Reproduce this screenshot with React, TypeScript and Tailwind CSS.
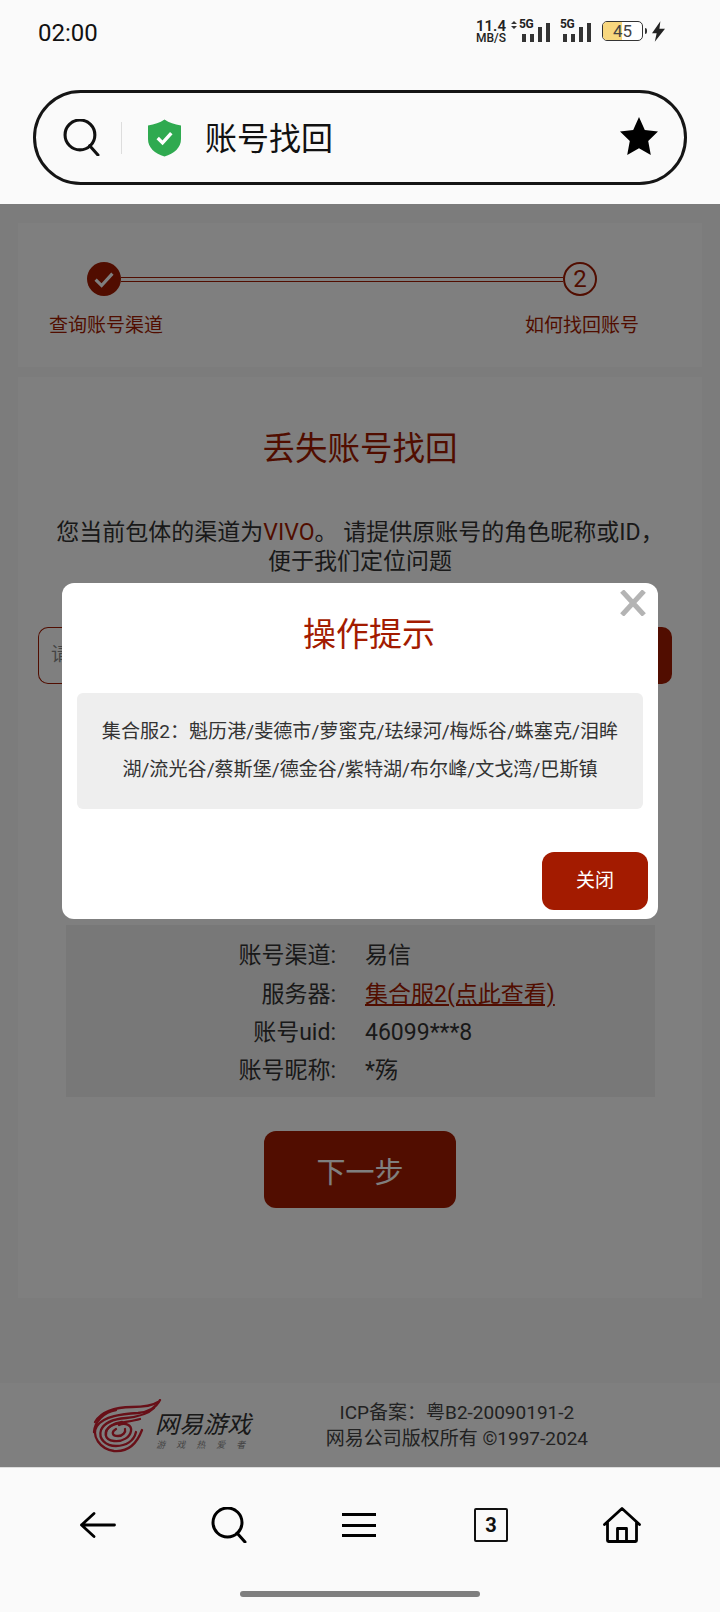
import React from 'react';

const FONT = "font-['Roboto','Noto_Sans_CJK_SC',sans-serif]";

function SearchIcon({ className }: { className?: string }) {
  return (
    <svg viewBox="0 0 36 36" fill="none" stroke="currentColor" strokeWidth="3" className={className}>
      <ellipse cx="16.5" cy="15.5" rx="14.5" ry="14.5" />
      <path d="M26 26l8 9" strokeLinecap="round" />
    </svg>
  );
}

function Signal({ arrows }: { arrows?: boolean }) {
  return (
    <div className="relative mb-[6px] flex h-[24px] items-end gap-[4px]">
      {arrows && (
        <svg viewBox="0 0 6 8" className="absolute left-[-11px] top-[3px] h-[8px] w-[6px]" fill="#333">
          <path d="M3 0l3 3H0zM3 8L0 5h6z" />
        </svg>
      )}
      <span className="absolute left-[-3px] top-[1px] text-[12px] font-bold leading-[11px] tracking-[-0.5px] text-[#222]">5G</span>
      <i className="h-[8px] w-[4px] bg-[#333]" />
      <i className="h-[8px] w-[4px] bg-[#333]" />
      <i className="h-[15px] w-[4px] bg-[#333]" />
      <i className="h-[19px] w-[4px] bg-[#333]" />
    </div>
  );
}

function StatusBar() {
  return (
    <div className="flex h-[62px] items-center justify-between pl-[38px] pr-[55px] pt-[4px] text-[#111]">
      <span className="text-[24px] leading-none">02:00</span>
      <div className="flex items-center">
        <div className="mb-[2px] mr-[16px] flex flex-col items-center leading-none text-[#222]">
          <span className="text-[15px] font-semibold leading-[13px]">11.4</span>
          <span className="text-[12px] font-medium leading-[11px]">MB/S</span>
        </div>
        <Signal arrows />
        <div className="w-[13px]" />
        <Signal />
        <div className="mb-[4px] ml-[11px] flex h-[20px] w-[41px] items-center overflow-hidden rounded-[5px] border border-[#333] bg-white">
          <div className="relative flex h-full w-full items-center justify-center text-[17px] leading-none text-[#444]">
            <div className="absolute inset-y-0 left-0 w-[19px] bg-[#f8d77e]" />
            <span className="relative">45</span>
          </div>
        </div>
        <div className="mb-[4px] ml-[2px] h-[6px] w-[2px] rounded-r bg-[#333]" />
        <svg viewBox="0 0 14 22" className="mb-[4px] ml-[5px] h-[21px] w-[13px]" fill="#222">
          <path d="M9 0L0 13h5l-2 9 11-14H8z" />
        </svg>
      </div>
    </div>
  );
}

function SearchBar() {
  return (
    <div className="mx-[33px] mt-[28px] flex h-[95px] items-center rounded-full border-[3px] border-[#151515] pl-[27px] pr-[25px]">
      <SearchIcon className="h-[37px] w-[37px] text-[#111]" />
      <div className="ml-[21px] h-[32px] w-px bg-[#ddd]" />
      <svg viewBox="0 0 34 38" className="ml-[26px] h-[38px] w-[33px]">
        <path d="M17 0c5 3.500 10 5 17 6v14c0 9-7 15-17 18C7 35 0 29 0 20V6c7-1 12-2.500 17-6z" fill="#2faa50" />
        <path d="M10 19l5 5 9-10" fill="none" stroke="#fff" strokeWidth="3.500" />
      </svg>
      <span className="ml-[24px] mt-[3px] text-[32px] font-normal leading-none text-[#111]">账号找回</span>
      <svg viewBox="0 0 40 40" className="mb-[3px] ml-auto h-[40px] w-[40px]" fill="#000">
        <path d="M20 1l5.800 12.900 13.200 1.600-9.800 9.400 2.600 14.100L20 32.200l-11.800 6.800 2.600-14.100L1 15.500l13.200-1.600z" />
      </svg>
    </div>
  );
}

function Stepper() {
  return (
    <section className="mx-[18px] h-[144px] bg-white pt-[39px]">
      <div className="ml-[69px] mr-[105px] flex items-center">
        <div className="flex h-[34px] w-[34px] shrink-0 items-center justify-center rounded-full bg-[#a31b00]">
          <svg viewBox="0 0 20 20" className="h-[24px] w-[24px]" fill="none" stroke="#fff" strokeWidth="2.600">
            <path d="M3 10.500l5 5 9-10" />
          </svg>
        </div>
        <div className="h-[5px] flex-1 border-y border-[#a31b00]" />
        <div className="flex h-[34px] w-[34px] shrink-0 items-center justify-center rounded-full border-2 border-[#a31b00] text-[24px] font-normal leading-none text-[#a31b00]">
          2
        </div>
      </div>
      <div className="mt-[17px] flex justify-between pl-[31px] pr-[63px] text-[19px] leading-[26px] text-[#a31b00]">
        <span>查询账号渠道</span>
        <span>如何找回账号</span>
      </div>
    </section>
  );
}

const INFO = [
  { label: '账号渠道:', value: '易信', rowClass: 'h-[40px]' },
  { label: '服务器:', value: '集合服2(点此查看)', link: true, rowClass: 'h-[38px]' },
  { label: '账号uid:', value: '46099***8', rowClass: 'h-[38px]' },
  { label: '账号昵称:', value: '*殇', rowClass: 'h-[38px]' },
];

function MainCard() {
  return (
    <section className="mx-[18px] mt-[10px] h-[921px] bg-white">
      <h1 className="pt-[52px] text-center text-[32.5px] font-normal leading-[40px] text-[#a31b00]">丢失账号找回</h1>
      <p className="mx-auto mt-[49px] w-[620px] text-center text-[23px] leading-[29px] text-[#333]">
        您当前包体的渠道为<span className="text-[#a31b00]">VIVO</span>。 请提供原账号的角色昵称或ID{'\uFF0C'}便于我们定位问题
      </p>
      <div className="ml-[20px] mr-[30px] mt-[51px] flex h-[57px]">
        <div className="flex flex-1 items-center rounded-l-[10px] border border-r-0 border-[#a31b00] pl-[12px] text-[19px] text-[#888]">
          请输入角色昵称或ID
        </div>
        <div className="w-[120px] rounded-r-[10px] bg-[#a31b00]" />
      </div>
      <div className="ml-[48px] mr-[47px] mt-[241px] h-[172px] bg-[#f0f0f0] pt-[11px] text-[23px] text-[#333]">
        {INFO.map((row) => (
          <div key={row.label} className={`flex items-center ${row.rowClass}`}>
            <span className="w-[270px] text-right">{row.label}</span>
            <span className={row.link ? 'ml-[29px] text-[#a31b00] underline' : 'ml-[29px]'}>{row.value}</span>
          </div>
        ))}
      </div>
      <button className="mx-auto mt-[34px] flex h-[77px] w-[192px] items-center justify-center rounded-[12px] bg-[#a31b00] pt-[8px] text-[29px] text-white">
        下一步
      </button>
    </section>
  );
}

function NeteaseLogo() {
  return (
    <div className="relative h-[54px] w-[162px]">
      <svg viewBox="0 0 70 54" className="absolute left-0 top-0 h-[54px] w-[70px]" fill="none" stroke="#d02030" strokeLinecap="round" strokeWidth="2.300">
        <path d="M68 1C64 9 56 13 46 14 30 15 12 17 5 27-1 37 8 50 22 52 34 53 44 47 50 31" />
        <path d="M62 9C56 15 44 18 34 19 22 20 12 24 9 31 6 40 14 47 24 47 34 47 42 42 44 33" />
        <path d="M48 20C38 23 26 23 19 27 11 32 12 41 22 42 31 43 38 38 39 32 40 26 33 23 27 26" />
        <path d="M24 30C19 33 20 37 26 37 31 37 34 33 33 30" />
        <path d="M3 23C10 12 25 8 40 8 50 8 60 7 66 3" />
        <path d="M2 33C3 22 12 13 24 11" />
        <path d="M14 36C13 28 22 24 30 23" />
      </svg>
      <span className="absolute left-[65px] top-[12px] origin-left skew-x-[-14deg] text-[24px] font-normal leading-[28px] text-[#333]">
        网易游戏
      </span>
      <span className="absolute left-[65px] top-[40px] skew-x-[-14deg] whitespace-nowrap text-[9px] leading-[12px] tracking-[11px] text-[#888]">
        游戏热爱者
      </span>
    </div>
  );
}

function Footer() {
  return (
    <footer className="mt-[85px] flex h-[85px] items-center bg-white pl-[92px] pr-[132px]">
      <NeteaseLogo />
      <div className="ml-auto pt-[1px] text-center text-[19px] leading-[26px] text-[#444]">
        <div>ICP备案{'\uFF1A'}粤B2-20090191-2</div>
        <div>网易公司版权所有 ©1997-2024</div>
      </div>
    </footer>
  );
}

function BottomNav() {
  return (
    <nav className="relative h-[144px] border-t border-[#ddd] bg-[#fafafa]">
      <div className="flex h-[82px] items-center pl-[80px] pr-[79px] pt-[32px] text-black">
        <svg viewBox="0 0 36 26" className="h-[26px] w-[36px]" fill="none" stroke="currentColor" strokeWidth="2.800" strokeLinecap="round" strokeLinejoin="round">
          <path d="M14 1.500L1.500 13 14 24.500M1.500 13H34.500" />
        </svg>
        <SearchIcon className="ml-[95px] h-[36px] w-[36px]" />
        <div className="ml-[95px] flex h-[24px] w-[34px] flex-col justify-between">
          <i className="h-[3px] bg-black" />
          <i className="h-[3px] bg-black" />
          <i className="h-[3px] bg-black" />
        </div>
        <div className="ml-[98px] flex h-[34px] w-[34px] items-center justify-center rounded-[2px] border-[2.500px] border-[#111] text-[20px] font-bold leading-none text-[#111]">
          3
        </div>
        <svg viewBox="0 0 38 36" className="ml-auto h-[36px] w-[38px]" fill="none" stroke="#000" strokeWidth="2.800" strokeLinejoin="round" strokeLinecap="round">
          <path d="M1.500 17.500L19 1.500l17.500 16M4.500 15v18.500a1 1 0 0 0 1 1h27a1 1 0 0 0 1-1V15M14.500 34V21.500h9V34" />
        </svg>
      </div>
      <div className="mx-auto mt-[41px] h-[6px] w-[240px] rounded-full bg-[#7f7f7f]" />
    </nav>
  );
}

function Dialog() {
  return (
    <div className="absolute left-[62px] top-[583px] h-[336px] w-[596px] rounded-[12px] bg-white">
      <svg viewBox="0 0 26 26" className="absolute right-[12px] top-[7px] h-[26px] w-[26px]" stroke="#b4b4b4" strokeWidth="5">
        <path d="M2 1l22 24M24 1L2 25" />
      </svg>
      <h2 className="pl-[18px] pt-[32px] text-center text-[33px] font-normal leading-[40px] text-[#a31b00]">操作提示</h2>
      <div className="mx-[15px] mt-[38px] h-[116px] rounded-[6px] bg-[#eeeeee] px-[20px] py-[20px] text-center text-[19.1px] leading-[38px] text-[#333]">
        集合服2{'\uFF1A'}魁历港/斐德市/萝蜜克/珐绿河/梅烁谷/蛛塞克/泪眸湖/流光谷/蔡斯堡/德金谷/紫特湖/布尔峰/文戈湾/巴斯镇
      </div>
      <button className="absolute bottom-[9px] right-[10px] h-[58px] w-[106px] rounded-[12px] bg-[#a31b00] text-[19px] text-white">
        关闭
      </button>
    </div>
  );
}

export default function App() {
  return (
    <div className={`relative flex h-[1612px] w-[720px] flex-col overflow-hidden bg-[#fafafa] ${FONT}`}>
      <header className="h-[204px] shrink-0">
        <StatusBar />
        <SearchBar />
      </header>
      <main className="relative h-[1263px] bg-[#f8f8f8] pt-[19px]">
        <Stepper />
        <MainCard />
        <Footer />
        <div className="absolute inset-0 bg-black/50" />
      </main>
      <BottomNav />
      <Dialog />
    </div>
  );
}
